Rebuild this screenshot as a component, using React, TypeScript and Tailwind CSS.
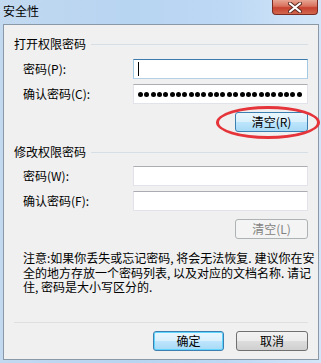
import React from "react";

const font = "font-['Microsoft_YaHei','Noto_Sans_CJK_SC',sans-serif]";

function Field({ label, focused, dots }: { label: string; focused?: boolean; dots?: number }) {
  return (
    <div className="flex items-center">
      <span className="pl-[9px] text-[12px] leading-[16px] text-black">{label}</span>
      <div
        className={
          "ml-auto w-[175px] h-[20px] bg-white border flex items-center px-[4px] " +
          (focused
            ? "border-[#3d7bad] border-b-[#b5cfe7] border-x-[#a4c9e3]"
            : "border-[#e2e3ea] border-t-[#abadb3]")
        }
      >
        {focused && <div className="w-px h-[14px] bg-black" />}
        {dots ? (
          <div className="flex gap-[1.35px]">
            {Array.from({ length: dots }).map((_, i) => (
              <span key={i} className="block w-[5px] h-[5px] rounded-full bg-black" />
            ))}
          </div>
        ) : null}
      </div>
    </div>
  );
}

function Btn({
  children,
  w,
  variant = "normal",
}: {
  children: React.ReactNode;
  w: string;
  variant?: "normal" | "hot" | "default" | "disabled";
}) {
  const styles = {
    normal:
      "border-[#707070] bg-[linear-gradient(to_bottom,#f2f2f2_0%,#ebebeb_50%,#dddddd_50%,#cfcfcf_100%)] text-black",
    hot: "border-[#3c7fb1] bg-[linear-gradient(to_bottom,#eaf6fd_0%,#d9f0fc_50%,#bee6fd_50%,#a7d9f5_100%)] text-black",
    default:
      "border-[#3c7fb1] shadow-[inset_0_0_0_1px_#5fd4ff] bg-[linear-gradient(to_bottom,#eaf6fd_0%,#d9f0fc_50%,#bee6fd_50%,#a7d9f5_100%)] text-black",
    disabled: "border-[#adb2b5] bg-[#f4f4f4] text-[#838383]",
  }[variant];
  return (
    <div
      className={`${w} h-[20px] rounded-[3px] border flex items-center justify-center text-[12px] leading-[16px] ${styles}`}
    >
      {children}
    </div>
  );
}

function Header({ text }: { text: string }) {
  return (
    <div className="flex items-center gap-[5px] h-[16px]">
      <span className="text-[12px] leading-[16px] text-black">{text}</span>
      <div className="flex-1 h-px bg-[#d5dfe5]" />
    </div>
  );
}

export default function App() {
  return (
    <div
      className={`${font} w-[321px] h-[363px] flex flex-col bg-[linear-gradient(to_right,#c2d9f0_0%,#b7d4f1_40%,#bcd8f4_70%,#d3e6f9_100%)]`}
    >
      {/* Title bar */}
      <div className="h-[24px] flex items-start justify-between">
        <span className="pl-[3px] pt-[3px] text-[12px] leading-[16px] text-black">安全性</span>
        <div className="mr-[3px] w-[46px] h-[15px] rounded-b-[4px] border border-t-0 border-[#7a2b22] bg-[linear-gradient(to_bottom,#e8a593_0%,#d8705c_45%,#c7422f_55%,#d2674f_100%)] flex items-center justify-center">
          <svg width="14" height="11" viewBox="0 0 14 11">
            <path d="M2 1.5 L12 9.5 M12 1.5 L2 9.5" stroke="#5a2a22" strokeWidth="4" strokeLinecap="round" />
            <path d="M2 1.5 L12 9.5 M12 1.5 L2 9.5" stroke="#ffffff" strokeWidth="2.2" strokeLinecap="round" />
          </svg>
        </div>
      </div>

      {/* Client area */}
      <div className="ml-[3px] w-[316px] h-[336px] border border-[#8b98a8] bg-[#f0f0f0] px-[10px] pt-[11px] flex flex-col">
        <Header text="打开权限密码" />
        <div className="mt-[7px]">
          <Field label="密码(P):" focused />
        </div>
        <div className="mt-[5px]">
          <Field label="确认密码(C):" dots={26} />
        </div>
        <div className="mt-[8px] self-end relative">
          <Btn w="w-[73px]" variant="hot">
            清空(R)
          </Btn>
          <div className="absolute left-[-19px] top-[-6px] w-[104px] h-[33px] rounded-[50%] border-[3px] border-[#e5343a]" />
        </div>

        <div className="mt-[12px]">
          <Header text="修改权限密码" />
        </div>
        <div className="mt-[6px]">
          <Field label="密码(W):" />
        </div>
        <div className="mt-[5px]">
          <Field label="确认密码(F):" />
        </div>
        <div className="mt-[8px] self-end">
          <Btn w="w-[73px]" variant="disabled">
            清空(L)
          </Btn>
        </div>

        <p className="mt-[12px] pl-[9px] text-[12px] leading-[14.5px] text-black whitespace-nowrap">
          注意:如果你丢失或忘记密码, 将会无法恢复. 建议你在安
          <br />
          全的地方存放一个密码列表, 以及对应的文档名称. 请记
          <br />
          住, 密码是大小写区分的.
        </p>

        <div className="mt-[27px] h-px bg-[#dfdfdf]" />

        <div className="mt-[8px] flex justify-end gap-[12px]">
          <Btn w="w-[71px]" variant="default">
            确定
          </Btn>
          <Btn w="w-[72px]">取消</Btn>
        </div>
      </div>
    </div>
  );
}
